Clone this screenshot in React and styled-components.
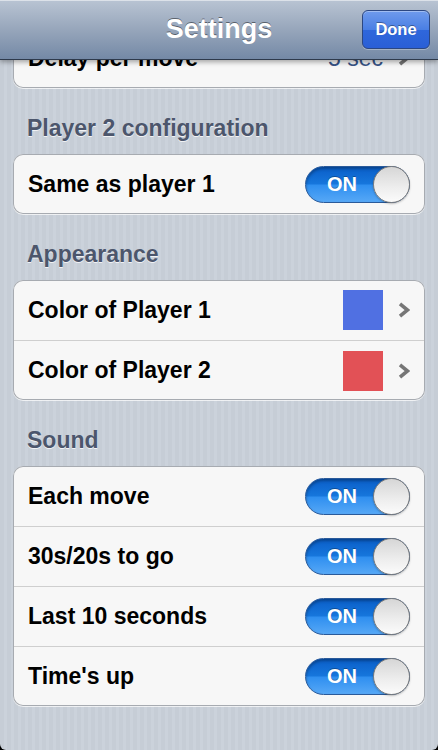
import React from 'react';
import styled, { createGlobalStyle } from 'styled-components';

const GlobalStyle = createGlobalStyle`
  html, body {
    margin: 0;
    padding: 0;
    background: #000;
  }
  body {
    font-family: "Liberation Sans", Arial, Helvetica, sans-serif;
    -webkit-font-smoothing: antialiased;
  }
`;

const sections = [
  {
    title: 'Player 2 configuration',
    rows: [{ label: 'Same as player 1', type: 'switch' }],
  },
  {
    title: 'Appearance',
    rows: [
      { label: 'Color of Player 1', type: 'color', color: '#5070e2' },
      { label: 'Color of Player 2', type: 'color', color: '#e25156' },
    ],
  },
  {
    title: 'Sound',
    rows: [
      { label: 'Each move', type: 'switch' },
      { label: '30s/20s to go', type: 'switch' },
      { label: 'Last 10 seconds', type: 'switch' },
      { label: "Time's up", type: 'switch' },
    ],
  },
];

const Chevron = () => (
  <ChevronIcon viewBox="0 0 12 16" width="12" height="16">
    <polyline points="2,1.8 9.5,8 2,14.2" fill="none" stroke="#767676" strokeWidth="3.6" strokeLinejoin="miter" />
  </ChevronIcon>
);

const Switch = () => (
  <SwitchTrack>
    <SwitchLabel>ON</SwitchLabel>
    <Knob />
  </SwitchTrack>
);

const Row = ({ row }) => (
  <Cell>
    <Label>{row.label}</Label>
    {row.type === 'switch' && <Switch />}
    {row.type === 'color' && (
      <Accessory>
        <Swatch $color={row.color} />
        <Chevron />
      </Accessory>
    )}
    {row.type === 'value' && (
      <Accessory>
        <Value>{row.value}</Value>
        <Chevron />
      </Accessory>
    )}
  </Cell>
);

const App = () => (
  <>
    <GlobalStyle />
    <Screen>
      <NavBar>
        <Title>Settings</Title>
        <DoneButton>Done</DoneButton>
      </NavBar>
      <Content>
        <Group>
          <Row row={{ label: 'Delay per move', type: 'value', value: '5 sec' }} />
        </Group>
        {sections.map((s) => (
          <Section key={s.title}>
            <SectionHeader>{s.title}</SectionHeader>
            <Group>
              {s.rows.map((r) => (
                <Row key={r.label} row={r} />
              ))}
            </Group>
          </Section>
        ))}
      </Content>
    </Screen>
  </>
);

export default App;

const Screen = styled.div`
  position: relative;
  width: 438px;
  height: 750px;
  overflow: hidden;
  border-radius: 0 0 6px 6px;
  background-color: #c8cfd8;
  background-image: repeating-linear-gradient(
    90deg,
    #c6cdd6 0px,
    #c6cdd6 4px,
    #cbd2db 4px,
    #cbd2db 7px
  );
`;

const NavBar = styled.div`
  position: absolute;
  top: 0;
  left: 0;
  right: 0;
  height: 59px;
  z-index: 2;
  display: flex;
  align-items: center;
  justify-content: center;
  background: linear-gradient(to bottom, #b9c4d3 0%, #97a6bb 50%, #7489a6 100%);
  border-bottom: 1px solid #2e3a4c;
  box-shadow: inset 0 1px 0 rgba(255, 255, 255, 0.5), 0 2px 5px rgba(0, 0, 0, 0.35);
`;

const Title = styled.h1`
  margin: 0;
  font-size: 27px;
  font-weight: 700;
  color: #fff;
  text-shadow: 0 -1px 0 rgba(0, 0, 0, 0.45);
`;

const DoneButton = styled.button`
  position: absolute;
  right: 8px;
  top: 10px;
  width: 68px;
  height: 39px;
  padding: 0;
  border: 1px solid #2c4781;
  border-radius: 6px;
  background: linear-gradient(to bottom, #6f9bec 0%, #4a7fe4 50%, #2f67dc 51%, #2a5fd6 100%);
  box-shadow: inset 0 1px 0 rgba(255, 255, 255, 0.35), 0 1px 0 rgba(255, 255, 255, 0.3);
  color: #fff;
  font-family: "Liberation Sans", Arial, sans-serif;
  font-size: 16.5px;
  font-weight: 700;
  text-shadow: 0 -1px 0 rgba(0, 0, 0, 0.35);
`;

const Content = styled.div`
  padding-top: 28px;
`;

const Section = styled.section``;

const SectionHeader = styled.h2`
  margin: 0;
  padding: 28px 0 14px 27px;
  height: 24px;
  line-height: 24px;
  font-size: 23px;
  font-weight: 700;
  color: #4c566c;
  text-shadow: 0 1px 0 rgba(255, 255, 255, 0.75);
`;

/* border drawn as an inset ring so each row keeps a clean 60px pitch */
const Group = styled.div`
  margin: 0 13px;
  background: #f7f7f7;
  border-radius: 10px;
  box-shadow: inset 0 0 0 1px #a7abb1, 0 1px 0 rgba(255, 255, 255, 0.7);
`;

const Cell = styled.div`
  display: flex;
  align-items: center;
  justify-content: space-between;
  box-sizing: border-box;
  height: 60px;
  padding: 0 15px 0 15px;

  & + & {
    border-top: 1px solid #cfcfcf;
    margin: 0 1px;
    padding: 0 14px;
  }
`;

const Label = styled.span`
  font-size: 23px;
  font-weight: 700;
  color: #000;
`;

const Accessory = styled.div`
  display: flex;
  align-items: center;
  gap: 15px;
`;

const Value = styled.span`
  font-size: 23px;
  color: #385487;
`;

const Swatch = styled.div`
  width: 40px;
  height: 40px;
  background: ${(p) => p.$color};
`;

const ChevronIcon = styled.svg`
  display: block;
`;

const SwitchTrack = styled.div`
  position: relative;
  width: 105px;
  height: 37px;
  box-sizing: border-box;
  border-radius: 19px;
  border: 1px solid #2a5a9a;
  background: linear-gradient(to bottom, #0a5ec8 0%, #1676dc 48%, #2f8ff0 52%, #56a8f6 100%);
  box-shadow: inset 0 2px 3px rgba(0, 0, 0, 0.3);
  display: flex;
  align-items: center;
`;

const SwitchLabel = styled.span`
  width: 72px;
  text-align: center;
  font-size: 20px;
  font-weight: 700;
  color: #fff;
  text-shadow: 0 -1px 0 rgba(0, 0, 0, 0.3);
`;

const Knob = styled.div`
  position: absolute;
  right: -1px;
  top: -1px;
  width: 37px;
  height: 37px;
  box-sizing: border-box;
  border-radius: 50%;
  border: 1px solid #7c7c7c;
  background: linear-gradient(to bottom, #d6d6d6 0%, #eeeeee 60%, #fbfbfb 100%);
  box-shadow: 0 1px 2px rgba(0, 0, 0, 0.25);
`;
